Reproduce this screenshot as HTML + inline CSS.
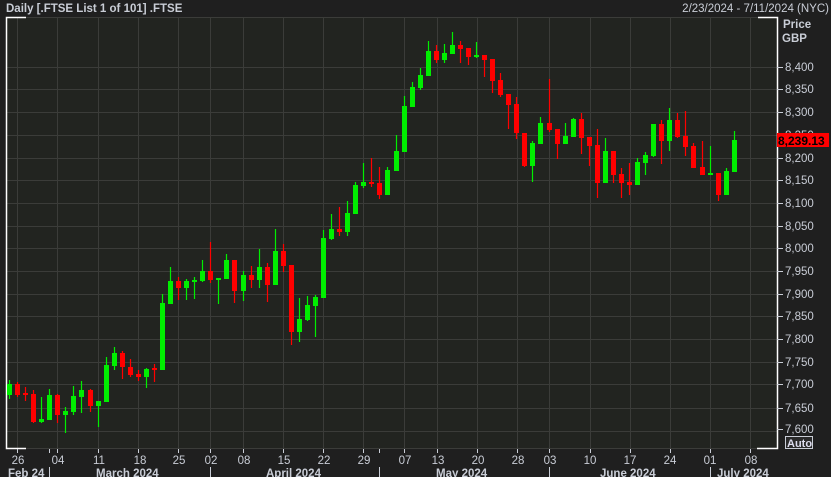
<!DOCTYPE html>
<html><head><style>
html,body{margin:0;padding:0;background:#1f1f1f;width:831px;height:477px;overflow:hidden}
svg{display:block}
text{font-family:"Liberation Sans",sans-serif}
</style></head><body>
<svg width="831" height="477" viewBox="0 0 831 477" xmlns="http://www.w3.org/2000/svg">
<rect width="831" height="477" fill="#1f1f1f"/>
<rect x="6" y="17" width="771" height="432" fill="#222420"/>
<g stroke="#3b3c39" stroke-width="1">
<line x1="6" y1="67.5" x2="777" y2="67.5"/><line x1="6" y1="89.5" x2="777" y2="89.5"/><line x1="6" y1="112.5" x2="777" y2="112.5"/><line x1="6" y1="135.5" x2="777" y2="135.5"/><line x1="6" y1="158.5" x2="777" y2="158.5"/><line x1="6" y1="180.5" x2="777" y2="180.5"/><line x1="6" y1="203.5" x2="777" y2="203.5"/><line x1="6" y1="226.5" x2="777" y2="226.5"/><line x1="6" y1="248.5" x2="777" y2="248.5"/><line x1="6" y1="271.5" x2="777" y2="271.5"/><line x1="6" y1="294.5" x2="777" y2="294.5"/><line x1="6" y1="316.5" x2="777" y2="316.5"/><line x1="6" y1="339.5" x2="777" y2="339.5"/><line x1="6" y1="362.5" x2="777" y2="362.5"/><line x1="6" y1="384.5" x2="777" y2="384.5"/><line x1="6" y1="408.5" x2="777" y2="408.5"/><line x1="6" y1="431.5" x2="777" y2="431.5"/>
<line x1="6" y1="17.5" x2="777" y2="17.5"/><line x1="6" y1="448.5" x2="777" y2="448.5"/>
<line x1="17.5" y1="17" x2="17.5" y2="449"/><line x1="57.5" y1="17" x2="57.5" y2="449"/><line x1="98.5" y1="17" x2="98.5" y2="449"/><line x1="138.5" y1="17" x2="138.5" y2="449"/><line x1="178.5" y1="17" x2="178.5" y2="449"/><line x1="210.5" y1="17" x2="210.5" y2="449"/><line x1="243.5" y1="17" x2="243.5" y2="449"/><line x1="283.5" y1="17" x2="283.5" y2="449"/><line x1="323.5" y1="17" x2="323.5" y2="449"/><line x1="363.5" y1="17" x2="363.5" y2="449"/><line x1="404.5" y1="17" x2="404.5" y2="449"/><line x1="437.5" y1="17" x2="437.5" y2="449"/><line x1="477.5" y1="17" x2="477.5" y2="449"/><line x1="517.5" y1="17" x2="517.5" y2="449"/><line x1="549.5" y1="17" x2="549.5" y2="449"/><line x1="590.5" y1="17" x2="590.5" y2="449"/><line x1="630.5" y1="17" x2="630.5" y2="449"/><line x1="670.5" y1="17" x2="670.5" y2="449"/><line x1="710.5" y1="17" x2="710.5" y2="449"/><line x1="750.5" y1="17" x2="750.5" y2="449"/>
</g>
<g stroke="#fff" stroke-width="1.5" fill="none">
<polyline points="26,17.5 6.5,17.5 6.5,448.5 26,448.5"/>
<polyline points="758,17.5 777.5,17.5 777.5,448.5 757,448.5"/>
</g>
<!-- green wicks -->
<path stroke="#00ee00" stroke-width="1.2" fill="none" d="M9.5 380V399M41.5 397V423M49.5 389V420M65.5 407V433M73.5 386V415M81.5 381V413M98.5 401V427M106.5 357V402M114.5 347V370M146.5 368V388M162.5 294V370M170.5 267V304M186.5 279V300M194.5 277V299M202.5 260V282M218.5 278V304M226.5 254V279M243.5 271V301M259.5 249V288M275.5 229V285M299.5 298V342M307.5 296V321M315.5 295V337M323.5 230V298M331.5 214V240M347.5 201V236M355.5 182V214M363.5 163V188M387.5 167V195M396.5 135V171M404.5 96V152M412.5 82V107M420.5 68V90M428.5 41V76M444.5 44V63M452.5 32V54M476.5 42V58M532.5 141V182M540.5 117V144M565.5 123V144M573.5 118V137M605.5 138V183M637.5 158V185M645.5 152V175M653.5 124V157M669.5 108V151M710.5 146V175M726.5 168V195M734.5 131V172"/>
<!-- green bodies -->
<path fill="#00ee00" d="M7 384h5v11h-5zM39 419h5v3h-5zM47 395h5v25h-5zM63 411h5v4h-5zM71 396h5v16h-5zM79 390h5v7h-5zM96 401h5v5h-5zM104 365h5v37h-5zM112 353h5v13h-5zM144 369h5v8h-5zM160 303h5v67h-5zM168 281h5v23h-5zM184 281h5v7h-5zM192 280h5v2h-5zM200 271h5v10h-5zM216 278h5v2h-5zM224 260h5v19h-5zM241 275h5v16h-5zM257 267h5v13h-5zM273 251h5v34h-5zM297 319h5v13h-5zM305 305h5v15h-5zM313 297h5v9h-5zM321 238h5v60h-5zM329 229h5v10h-5zM345 213h5v19h-5zM353 185h5v29h-5zM361 182h5v4h-5zM385 170h5v25h-5zM394 151h5v20h-5zM402 106h5v46h-5zM410 87h5v20h-5zM418 75h5v13h-5zM426 51h5v25h-5zM442 53h5v7h-5zM450 45h5v9h-5zM474 55h5v2h-5zM530 143h5v23h-5zM538 123h5v21h-5zM563 136h5v8h-5zM571 119h5v18h-5zM603 151h5v32h-5zM635 162h5v23h-5zM643 155h5v8h-5zM651 124h5v32h-5zM667 120h5v21h-5zM708 173h5v2h-5zM724 171h5v24h-5zM732 140h5v32h-5z"/>
<!-- red wicks -->
<path stroke="#ff0000" stroke-width="1.2" fill="none" d="M17.5 382V397M25.5 387V401M33.5 390V423M57.5 394V423M90.5 389V412M122.5 351V379M130.5 359V377M138.5 370V381M154.5 364V382M178.5 277V300M210.5 242V283M234.5 260V303M251.5 266V288M267.5 263V302M283.5 244V272M291.5 265V345M339.5 207V236M371.5 158V187M379.5 167V199M436.5 45V63M460.5 41V63M468.5 48V65M484.5 55V77M492.5 59V93M500.5 73V97M508.5 94V129M516.5 97V139M524.5 133V167M549.5 79V132M557.5 129V159M581.5 113V154M589.5 137V166M597.5 129V198M613.5 151V183M621.5 168V198M629.5 163V195M661.5 120V164M677.5 113V138M685.5 111V156M693.5 143V168M702.5 141V175M718.5 173V201"/>
<!-- red bodies -->
<path fill="#ff0000" d="M15 384h5v11h-5zM23 393h5v2h-5zM31 394h5v28h-5zM55 395h5v20h-5zM88 390h5v16h-5zM120 353h5v14h-5zM128 367h5v8h-5zM136 374h5v3h-5zM152 368h5v2h-5zM176 281h5v7h-5zM208 271h5v9h-5zM232 260h5v31h-5zM249 275h5v5h-5zM265 267h5v18h-5zM281 251h5v15h-5zM289 265h5v67h-5zM337 229h5v3h-5zM369 182h5v2h-5zM377 183h5v12h-5zM434 51h5v9h-5zM458 45h5v4h-5zM466 48h5v9h-5zM482 55h5v5h-5zM490 59h5v22h-5zM498 80h5v15h-5zM506 94h5v11h-5zM514 104h5v29h-5zM522 133h5v33h-5zM547 123h5v7h-5zM555 129h5v15h-5zM579 119h5v19h-5zM587 137h5v9h-5zM595 145h5v38h-5zM611 151h5v24h-5zM619 174h5v9h-5zM627 182h5v3h-5zM659 124h5v17h-5zM675 120h5v17h-5zM683 136h5v11h-5zM691 146h5v22h-5zM700 167h5v8h-5zM716 173h5v22h-5z"/>
<text x="6" y="12" fill="#c9cdd6" font-size="11.5" font-weight="bold">Daily [.FTSE List 1 of 101] .FTSE</text>
<text x="829" y="12" fill="#c9cdd6" font-size="11.5" text-anchor="end">2/23/2024 - 7/11/2024 (NYC)</text>
<text x="783" y="28" fill="#c9cdd6" font-size="11.5" font-weight="bold">Price</text>
<text x="782" y="42" fill="#c9cdd6" font-size="11.5" font-weight="bold">GBP</text>
<g stroke="#c9cdd6"><line x1="777" y1="67.5" x2="783" y2="67.5"/><line x1="777" y1="89.5" x2="783" y2="89.5"/><line x1="777" y1="112.5" x2="783" y2="112.5"/><line x1="777" y1="158.5" x2="783" y2="158.5"/><line x1="777" y1="180.5" x2="783" y2="180.5"/><line x1="777" y1="203.5" x2="783" y2="203.5"/><line x1="777" y1="226.5" x2="783" y2="226.5"/><line x1="777" y1="248.5" x2="783" y2="248.5"/><line x1="777" y1="271.5" x2="783" y2="271.5"/><line x1="777" y1="294.5" x2="783" y2="294.5"/><line x1="777" y1="316.5" x2="783" y2="316.5"/><line x1="777" y1="339.5" x2="783" y2="339.5"/><line x1="777" y1="362.5" x2="783" y2="362.5"/><line x1="777" y1="384.5" x2="783" y2="384.5"/><line x1="777" y1="408.5" x2="783" y2="408.5"/><line x1="777" y1="429.5" x2="783" y2="429.5"/></g>
<g fill="#c9cdd6" font-size="11.5">
<text x="785" y="71">8,400</text><text x="785" y="93">8,350</text><text x="785" y="116">8,300</text><text x="785" y="139">8,250</text><text x="785" y="162">8,200</text><text x="785" y="184">8,150</text><text x="785" y="207">8,100</text><text x="785" y="230">8,050</text><text x="785" y="252">8,000</text><text x="785" y="275">7,950</text><text x="785" y="298">7,900</text><text x="785" y="320">7,850</text><text x="785" y="343">7,800</text><text x="785" y="366">7,750</text><text x="785" y="388">7,700</text><text x="785" y="412">7,650</text><text x="785" y="433">7,600</text>
</g>
<rect x="777" y="133" width="52" height="14" fill="#ff0000"/>
<text x="778" y="145" fill="#000" font-size="12" font-weight="bold">8,239.13</text>
<rect x="785.5" y="436.5" width="27" height="12" fill="#2a2a2a" stroke="#c9cdd6"/>
<text x="787" y="447" fill="#dde" font-size="11" font-weight="bold">Auto</text>
<g stroke="#c9cdd6"><line x1="17.5" y1="449" x2="17.5" y2="453"/><line x1="49.5" y1="449" x2="49.5" y2="453"/><line x1="57.5" y1="449" x2="57.5" y2="453"/><line x1="98.5" y1="449" x2="98.5" y2="453"/><line x1="138.5" y1="449" x2="138.5" y2="453"/><line x1="178.5" y1="449" x2="178.5" y2="453"/><line x1="210.5" y1="449" x2="210.5" y2="453"/><line x1="243.5" y1="449" x2="243.5" y2="453"/><line x1="283.5" y1="449" x2="283.5" y2="453"/><line x1="323.5" y1="449" x2="323.5" y2="453"/><line x1="363.5" y1="449" x2="363.5" y2="453"/><line x1="379.5" y1="449" x2="379.5" y2="453"/><line x1="404.5" y1="449" x2="404.5" y2="453"/><line x1="437.5" y1="449" x2="437.5" y2="453"/><line x1="477.5" y1="449" x2="477.5" y2="453"/><line x1="517.5" y1="449" x2="517.5" y2="453"/><line x1="549.5" y1="449" x2="549.5" y2="453"/><line x1="590.5" y1="449" x2="590.5" y2="453"/><line x1="630.5" y1="449" x2="630.5" y2="453"/><line x1="670.5" y1="449" x2="670.5" y2="453"/><line x1="710.5" y1="449" x2="710.5" y2="453"/><line x1="750.5" y1="449" x2="750.5" y2="453"/>
<line x1="49.5" y1="467" x2="49.5" y2="477"/><line x1="210.5" y1="467" x2="210.5" y2="477"/><line x1="379.5" y1="467" x2="379.5" y2="477"/><line x1="549.5" y1="467" x2="549.5" y2="477"/><line x1="710.5" y1="467" x2="710.5" y2="477"/></g>
<g fill="#c9cdd6" font-size="11.5" text-anchor="middle">
<text x="18" y="464">26</text><text x="58" y="464">04</text><text x="99" y="464">11</text><text x="140" y="464">18</text><text x="179" y="464">25</text><text x="211" y="464">02</text><text x="244" y="464">08</text><text x="284" y="464">15</text><text x="324" y="464">22</text><text x="364" y="464">29</text><text x="405" y="464">07</text><text x="438" y="464">13</text><text x="478" y="464">20</text><text x="518" y="464">28</text><text x="550" y="464">03</text><text x="590" y="464">10</text><text x="630" y="464">17</text><text x="670" y="464">24</text><text x="710" y="464">01</text><text x="751" y="464">08</text>
</g>
<g fill="#c9cdd6" font-size="11.5" font-weight="bold">
<text x="8" y="477">Feb 24</text><text x="96" y="477">March 2024</text><text x="266" y="477">April 2024</text><text x="436" y="477">May 2024</text><text x="600" y="477">June 2024</text><text x="717" y="477">July 2024</text>
</g>
</svg>
</body></html>
